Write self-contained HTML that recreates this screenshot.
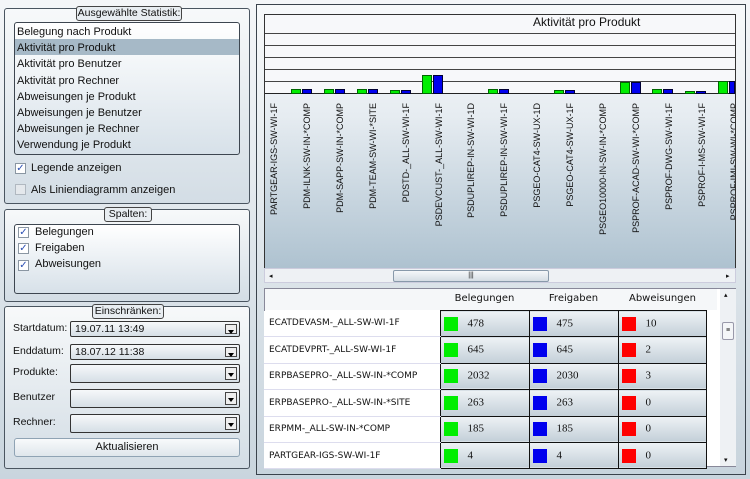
<!DOCTYPE html>
<html><head><meta charset="utf-8"><style>
*{box-sizing:border-box;margin:0;padding:0}
body{width:750px;height:479px;background:linear-gradient(#f4f6f8,#c9d5de);font-family:"Liberation Sans","DejaVu Sans",sans-serif;font-size:11px;color:#111;position:relative;overflow:hidden}
.a{position:absolute}
.grp{position:absolute;border:1px solid #4a5560;border-radius:3px;background:linear-gradient(#f7f9fa,#d3dde5)}
.ttl{position:absolute;background:#e8edf1;border:1px solid #444;border-radius:3px;font-size:10.5px;line-height:13px;text-align:center;white-space:nowrap;overflow:hidden}
.inner{position:absolute;border:1px solid #3d4650;border-radius:3px;background:linear-gradient(#ffffff,#d7e1e9)}
.cb{position:absolute;width:11px;height:11px;border:1px solid #8a96a2;background:#fff;font-size:10px;line-height:9px;text-align:center;color:#2b4fb3;font-weight:bold}
.cb.off{background:#e4e8ec;border-color:#b0b8c0}
.combo{position:absolute;left:70px;width:170px;border:1px solid #333;border-radius:2px;background:linear-gradient(#f6f8fa,#d6dfe6);font-size:10.5px}
.combo .ar{position:absolute;right:2px;top:2px;width:12px;bottom:2px;border:1px solid #444;background:#eee}
.combo .ar:after{content:"";position:absolute;left:2px;top:5px;border-left:3px solid transparent;border-right:3px solid transparent;border-top:4px solid #000}
.lab{position:absolute;left:13px;font-size:10.5px}
.vl{position:absolute;transform-origin:0 0;transform:rotate(-90deg) translate(-100%,0);font-size:9px;white-space:nowrap;text-align:right;width:160px;direction:rtl}
.vl span{direction:ltr;unicode-bidi:embed}
.g{position:absolute;background:#00ee00;border:1px solid #060}
.b{position:absolute;background:#0000ee;border:1px solid #003}
table{border-collapse:collapse;position:absolute;left:264px;top:310px;width:442px;table-layout:fixed}
td{height:26.4px;font-family:"DejaVu Sans",sans-serif;font-size:10px;padding:0;white-space:nowrap;overflow:hidden}
td.n{width:176px;background:#fff;padding-left:5px;border-bottom:1px solid #dde;font-size:9px}
td.c{width:89px;background:linear-gradient(#eef2f5,#c3cfd8);border:1px solid #111;font-family:"Liberation Serif",serif;font-size:11px}
td.c i{display:inline-block;width:14px;height:14px;vertical-align:middle;margin:0 10px 0 3px}
</style></head><body>
<!-- group 1 -->
<div class="grp" style="left:4px;top:8px;width:246px;height:196px"></div>
<div class="ttl" style="left:76px;top:6px;width:106px">Ausgewählte Statistik:</div>
<div class="inner" style="left:14px;top:22px;width:226px;height:133px"></div>
<div class="a" style="left:15px;top:39px;width:224px;height:16px;background:#a6b9c7"></div>
<div class="a" style="left:17px;top:24px;line-height:16.2px;font-size:11px">Belegung nach Produkt<br>Aktivität pro Produkt<br>Aktivität pro Benutzer<br>Aktivität pro Rechner<br>Abweisungen je Produkt<br>Abweisungen je Benutzer<br>Abweisungen je Rechner<br>Verwendung je Produkt</div>
<div class="cb" style="left:15px;top:163px">✓</div><div class="a" style="left:31px;top:162px">Legende anzeigen</div>
<div class="cb off" style="left:15px;top:184px"></div><div class="a" style="left:31px;top:184px">Als Liniendiagramm anzeigen</div>
<!-- group 2 -->
<div class="grp" style="left:4px;top:209px;width:246px;height:93px"></div>
<div class="ttl" style="left:104px;top:207px;width:48px">Spalten:</div>
<div class="inner" style="left:14px;top:224px;width:226px;height:70px"></div>
<div class="cb" style="left:18px;top:227px">✓</div><div class="a" style="left:35px;top:226px">Belegungen</div>
<div class="cb" style="left:18px;top:243px">✓</div><div class="a" style="left:35px;top:242px">Freigaben</div>
<div class="cb" style="left:18px;top:260px">✓</div><div class="a" style="left:35px;top:258px">Abweisungen</div>
<!-- group 3 -->
<div class="grp" style="left:4px;top:306px;width:246px;height:163px"></div>
<div class="ttl" style="left:92px;top:304px;width:72px">Einschränken:</div>
<div class="lab" style="top:322px">Startdatum:</div><div class="combo" style="top:321px;height:16px"><span class="a" style="left:4px;top:1px">19.07.11 13:49</span><div class="ar"></div></div>
<div class="lab" style="top:345px">Enddatum:</div><div class="combo" style="top:344px;height:16px"><span class="a" style="left:4px;top:1px">18.07.12 11:38</span><div class="ar"></div></div>
<div class="lab" style="top:366px">Produkte:</div><div class="combo" style="top:364px;height:19px"><div class="ar"></div></div>
<div class="lab" style="top:391px">Benutzer</div><div class="combo" style="top:389px;height:19px"><div class="ar"></div></div>
<div class="lab" style="top:416px">Rechner:</div><div class="combo" style="top:414px;height:19px"><div class="ar"></div></div>
<div class="a" style="left:14px;top:438px;width:226px;height:19px;border:1px solid #8fa3b4;border-radius:3px;background:linear-gradient(#f8fafb,#dfe6ec);text-align:center;line-height:17px">Aktualisieren</div>
<!-- right -->
<div class="a" style="left:256px;top:4px;width:490px;height:471px;border:1px solid #3a434c;background:linear-gradient(#f7f9fa,#c8d4dd)"></div>
<div class="a" style="left:264px;top:14px;width:472px;height:254px;border:1px solid #333;border-bottom:none;background:linear-gradient(#fbfcfd 0%,#e6ecf1 40%,#aec2d0 100%)"></div>
<div class="a" style="left:265px;top:15px;width:470px;height:78px;background:#f7f8fa"></div>
<div class="a" style="left:533px;top:15px;font-size:12px">Aktivität pro Produkt</div>
<div class="a" style="left:265px;top:33px;width:470px;border-top:1px solid #444"></div>
<div class="a" style="left:265px;top:45px;width:470px;border-top:1px solid #444"></div>
<div class="a" style="left:265px;top:57px;width:470px;border-top:1px solid #444"></div>
<div class="a" style="left:265px;top:69px;width:470px;border-top:1px solid #444"></div>
<div class="a" style="left:265px;top:81px;width:470px;border-top:1px solid #444"></div>
<div class="a" style="left:265px;top:93px;width:470px;border-top:1px solid #222"></div>
<!-- bars -->
<div class="g" style="left:291px;top:89px;width:10px;height:5px"></div><div class="b" style="left:302px;top:89px;width:10px;height:5px"></div>
<div class="g" style="left:324px;top:89px;width:10px;height:5px"></div><div class="b" style="left:335px;top:89px;width:10px;height:5px"></div>
<div class="g" style="left:357px;top:89px;width:10px;height:5px"></div><div class="b" style="left:368px;top:89px;width:10px;height:5px"></div>
<div class="g" style="left:390px;top:90px;width:10px;height:4px"></div><div class="b" style="left:401px;top:90px;width:10px;height:4px"></div>
<div class="g" style="left:422px;top:75px;width:10px;height:19px"></div><div class="b" style="left:433px;top:75px;width:10px;height:19px"></div>
<div class="g" style="left:488px;top:89px;width:10px;height:5px"></div><div class="b" style="left:499px;top:89px;width:10px;height:5px"></div>
<div class="g" style="left:554px;top:90px;width:10px;height:4px"></div><div class="b" style="left:565px;top:90px;width:10px;height:4px"></div>
<div class="g" style="left:620px;top:82px;width:10px;height:12px"></div><div class="b" style="left:631px;top:82px;width:10px;height:12px"></div>
<div class="g" style="left:652px;top:89px;width:10px;height:5px"></div><div class="b" style="left:663px;top:89px;width:10px;height:5px"></div>
<div class="g" style="left:685px;top:91px;width:10px;height:3px"></div><div class="b" style="left:696px;top:91px;width:10px;height:3px"></div>
<div class="g" style="left:718px;top:81px;width:10px;height:13px"></div><div class="b" style="left:729px;top:81px;width:6px;height:13px"></div>
<!-- labels -->
<div class="a" style="left:265px;top:94px;width:470px;height:172px;overflow:hidden">
<div class="vl" style="left:4px;top:9px"><span>PARTGEAR-IGS-SW-WI-1F</span></div>
<div class="vl" style="left:37px;top:9px"><span>PDM-ILNK-SW-IN-*COMP</span></div>
<div class="vl" style="left:70px;top:9px"><span>PDM-SAPP-SW-IN-*COMP</span></div>
<div class="vl" style="left:103px;top:9px"><span>PDM-TEAM-SW-WI-*SITE</span></div>
<div class="vl" style="left:136px;top:9px"><span>PDSTD-_ALL-SW-WI-1F</span></div>
<div class="vl" style="left:169px;top:9px"><span>PSDEVCUST-_ALL-SW-WI-1F</span></div>
<div class="vl" style="left:201px;top:9px"><span>PSDUPLIREP-IN-SW-WI-1D</span></div>
<div class="vl" style="left:234px;top:9px"><span>PSDUPLIREP-IN-SW-WI-1F</span></div>
<div class="vl" style="left:267px;top:9px"><span>PSGEO-CAT4-SW-UX-1D</span></div>
<div class="vl" style="left:300px;top:9px"><span>PSGEO-CAT4-SW-UX-1F</span></div>
<div class="vl" style="left:333px;top:9px"><span>PSGEO10000-IN-SW-IN-*COMP</span></div>
<div class="vl" style="left:366px;top:9px"><span>PSPROF-ACAD-SW-WI-*COMP</span></div>
<div class="vl" style="left:399px;top:9px"><span>PSPROF-DWG-SW-WI-1F</span></div>
<div class="vl" style="left:432px;top:9px"><span>PSPROF-I-MS-SW-WI-1F</span></div>
<div class="vl" style="left:464px;top:9px"><span>PSPROF-IMI-SW-WI-*COMP</span></div>
</div>
<!-- hscroll -->
<div class="a" style="left:264px;top:268px;width:472px;height:15px;background:#eef1f4;border:1px solid #ccd"></div>
<div class="a" style="left:393px;top:270px;width:156px;height:12px;border:1px solid #8899aa;border-radius:2px;background:linear-gradient(#f5f7f9,#d5dde4);text-align:center;font-size:7px;line-height:10px">|||</div>
<div class="a" style="left:269px;top:272px;font-size:7px">◂</div><div class="a" style="left:726px;top:272px;font-size:7px">▸</div>
<!-- table -->
<div class="a" style="left:264px;top:288px;width:472px;height:179px;border:1px solid #889;background:#fff"></div>
<div class="a" style="left:265px;top:289px;width:452px;height:21px;background:#f5f7f9"></div>
<div class="a" style="left:440px;top:293px;width:89px;text-align:center;font-size:10px;font-family:'DejaVu Sans',sans-serif">Belegungen</div>
<div class="a" style="left:529px;top:293px;width:89px;text-align:center;font-size:10px;font-family:'DejaVu Sans',sans-serif">Freigaben</div>
<div class="a" style="left:618px;top:293px;width:89px;text-align:center;font-size:10px;font-family:'DejaVu Sans',sans-serif">Abweisungen</div>
<div class="a" style="left:720px;top:289px;width:16px;height:177px;background:#eef1f4"></div>
<div class="a" style="left:722px;top:322px;width:12px;height:18px;border:1px solid #99a;border-radius:2px;background:#f4f6f8;font-size:7px;text-align:center;line-height:16px">≡</div>
<div class="a" style="left:724px;top:291px;font-size:7px">▴</div><div class="a" style="left:724px;top:456px;font-size:7px">▾</div>
<table>
<colgroup><col style="width:176px"><col style="width:89px"><col style="width:89px"><col style="width:88px"></colgroup>
<tr><td class="n">ECATDEVASM-_ALL-SW-WI-1F</td><td class="c"><i style="background:#0e0"></i>478</td><td class="c"><i style="background:#00e"></i>475</td><td class="c"><i style="background:#f00"></i>10</td></tr>
<tr><td class="n">ECATDEVPRT-_ALL-SW-WI-1F</td><td class="c"><i style="background:#0e0"></i>645</td><td class="c"><i style="background:#00e"></i>645</td><td class="c"><i style="background:#f00"></i>2</td></tr>
<tr><td class="n">ERPBASEPRO-_ALL-SW-IN-*COMP</td><td class="c"><i style="background:#0e0"></i>2032</td><td class="c"><i style="background:#00e"></i>2030</td><td class="c"><i style="background:#f00"></i>3</td></tr>
<tr><td class="n">ERPBASEPRO-_ALL-SW-IN-*SITE</td><td class="c"><i style="background:#0e0"></i>263</td><td class="c"><i style="background:#00e"></i>263</td><td class="c"><i style="background:#f00"></i>0</td></tr>
<tr><td class="n">ERPMM-_ALL-SW-IN-*COMP</td><td class="c"><i style="background:#0e0"></i>185</td><td class="c"><i style="background:#00e"></i>185</td><td class="c"><i style="background:#f00"></i>0</td></tr>
<tr><td class="n" style="height:24px">PARTGEAR-IGS-SW-WI-1F</td><td class="c"><i style="background:#0e0"></i>4</td><td class="c"><i style="background:#00e"></i>4</td><td class="c"><i style="background:#f00"></i>0</td></tr>
</table>
</body></html>
